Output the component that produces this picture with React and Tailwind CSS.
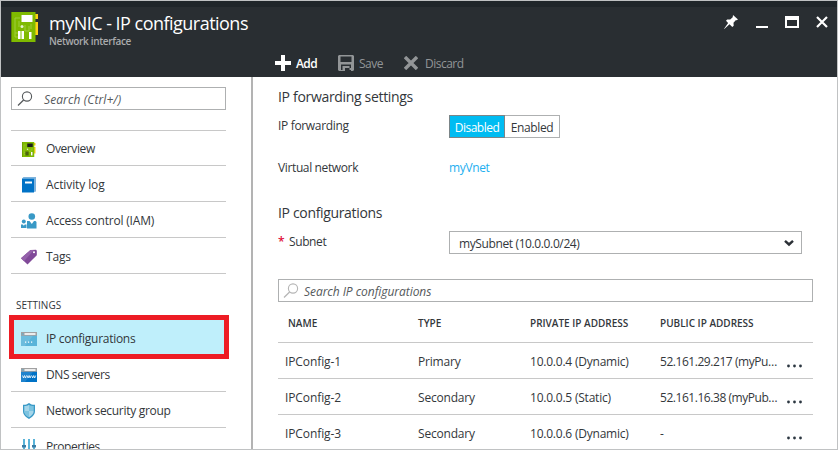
function NicIcon({ className, dark }) {
  return (
    <svg viewBox="0 0 28 30" className={className} preserveAspectRatio="none">
      <path d="M24 2h3v5h-3zM24 10h3v13h-3z" fill="#fcd116" />
      <path d="M0 0h24.500v30H0z" fill="#7fba00" />
      <path d="M0 0h1v30H0z" fill="#5e8a00" />
      <path d="M9 6H4v19h4M8 9v6M4 21h4M14 13v6h4v-5M20 12v5" fill="none" stroke="#a0cc3e" strokeWidth="1" />
      <path d="M10.500 3h11v7h-11z" fill={dark ? "#1e1e1e" : "#fff"} />
      <circle cx="11" cy="14.500" r="1.500" fill="#e8f3cf" />
      <path d="M7 19h2.500v8H7zM10.500 19H13v8h-2.500zM18 20h2.500v7H18z" fill={dark ? "#3c4a12" : "#fff"} />
      {dark && <path d="M18 20h3v7h-3z" fill="#fff" />}
    </svg>
  );
}

function BookIcon() {
  return (
    <svg viewBox="0 0 15 16" className="h-4 w-[15px]">
      <path d="M0 1.500 1.500 0H14v14.500L12 15V1.500z" fill="#7fb3dc" />
      <path d="M0 1.500h12V15.500H0z" fill="#0072c6" />
      <path d="M3 4.500h7v2H3z" fill="#fff" />
    </svg>
  );
}

function PeopleIcon() {
  return (
    <svg viewBox="0 0 16 16" className="size-4">
      <circle cx="2.800" cy="8.500" r="2" fill="#3999c6" />
      <path d="M0 11.500h1.800l1 1.200 1-1.200h1.700V15H0z" fill="#3999c6" />
      <circle cx="10.800" cy="3.500" r="3.300" fill="#3999c6" />
      <path d="M6 8h2.500l2.300 3L13 8h1.500l1 1v6.500H6z" fill="#3999c6" />
    </svg>
  );
}

function TagIcon() {
  return (
    <svg viewBox="0 0 16 16" className="size-4">
      <path d="M9.500 1 15 .8l.8 1v4.500L6.500 15.500 0 9.200z" fill="#804998" />
      <path d="M9.500 1 0 9.200l3 3L13 .9z" fill="#9461aa" />
      <circle cx="13" cy="3.300" r="1" fill="#fff" />
    </svg>
  );
}

function BrowserIcon({ www }) {
  return (
    <svg viewBox="0 0 16 14" className="h-[14px] w-4">
      <path d="M0 0h16v4H0z" fill="#a0a1a2" />
      <path d="M3.500 1.200h11v1.600h-11z" fill="#fff" />
      <circle cx="1.800" cy="2" r=".8" fill="#59b4d9" />
      <path d="M0 3.800h16V14H0z" fill={www ? "#0072c6" : "#59b4d9"} />
      <path d="M0 3.800h12L4 14H0z" fill="#fff" opacity=".12" />
      {www ? (
        <path d="m1.500 7.500 1 2.500 1-2.500 1 2.500 1-2.500m.6 0 1 2.500 1-2.500 1 2.500 1-2.500m.6 0 1 2.500 1-2.500 1 2.500 1-2.500" fill="none" stroke="#fff" strokeWidth=".8" />
      ) : (
        <path d="M4 9.500h1.200v1.200H4zM7 9.500h1.200v1.200H7zM10 9.500h1.200v1.200H10z" fill="#fff" />
      )}
    </svg>
  );
}

function ShieldIcon() {
  return (
    <svg viewBox="0 0 12 16" className="h-4 w-3">
      <path d="M6 0c2 1.500 4 2 6 1.800V8c0 4-3 6-6 8-3-2-6-4-6-8V1.800C2 2 4 1.500 6 0z" fill="#3999c6" />
      <path d="M6 1.700v12.500C3.200 12.500 1.300 11 1.300 8V3.100C3 3.100 4.500 2.700 6 1.700z" fill="#a5d6ea" />
      <path d="M6 1.700c1.500 1 3 1.400 4.700 1.400V8H6z" fill="#7cc3e0" />
      <path d="M1.300 8H6v6.200C3.200 12.500 1.300 11 1.300 8z" fill="#7cc3e0" />
      <path d="M6 8h4.700c0 3-1.900 4.500-4.700 6.200z" fill="#a5d6ea" />
    </svg>
  );
}

function SlidersIcon() {
  return (
    <svg viewBox="0 0 14 16" className="h-4 w-[14px]">
      <path d="M1 0h2v16H1zM6 0h2v16H6zM11 0h2v16h-2z" fill="#59b4d9" />
      <path d="M0 6h4v2.500H0zM5 10h4v2.500H5zM10 6h4v2.500h-4z" fill="#3a7ca5" />
    </svg>
  );
}

function SearchIcon({ className }) {
  return (
    <svg viewBox="0 0 16 16" className={className} fill="none" stroke="currentColor">
      <circle cx="10" cy="5.500" r="4.600" strokeWidth="1.100" />
      <path d="M6.600 9 1 14.500" strokeWidth="1.300" />
    </svg>
  );
}

function NavItem({ icon, label, tracking, last }) {
  return (
    <div className={`flex h-9 shrink-0 items-center border-b pt-[3px] ${last ? "border-transparent" : "border-[#c8c8c8]"}`}>
      <span className="ml-[10px] flex w-4 justify-center">{icon}</span>
      <span className={`ml-[9px] text-xs ${tracking}`}>{label}</span>
    </div>
  );
}

const rows = [
  ["IPConfig-1", "Primary", "10.0.0.4 (Dynamic)", "52.161.29.217 (myPu…"],
  ["IPConfig-2", "Secondary", "10.0.0.5 (Static)", "52.161.16.38 (myPub…"],
  ["IPConfig-3", "Secondary", "10.0.0.6 (Dynamic)", "-"],
];

export default function App() {
  return (
    <div className="flex h-[450px] w-[838px] flex-col overflow-hidden border border-[#c0c2c3] bg-white font-['Open_Sans','Noto_Sans',sans-serif] whitespace-nowrap text-[#33373b]">
      <header className="flex h-[76px] shrink-0 flex-col border-t-[6px] border-[#20262a] bg-[#292e32]">
        <div className="flex h-9 items-start">
          <NicIcon className="mt-[5px] ml-[10px] h-[30px] w-7" />
          <div className="ml-[10px] flex flex-col">
            <h1 className="mt-1 h-6 text-lg leading-6 tracking-[-0.52px] text-white">myNIC - IP configurations</h1>
            <p className="h-3 text-[10px] leading-3 font-semibold tracking-[-0.34px] text-[#a9abad]">Network interface</p>
          </div>
          <div className="mt-2 mr-[9px] ml-auto flex text-white">
            <svg viewBox="0 0 14 14" className="size-[14px]" fill="currentColor">
              <path d="m9 0 5 4.500-1.500.8-.8-.1-2.200 2.500.2 3.100-1.400 1.200-2.800-2.800L.3 14l-.2-.3 4-5.700L2 5.800l1.200-1.300 3 .1 2.500-2.400z" />
            </svg>
            <svg viewBox="0 0 12 14" className="ml-[18px] h-[14px] w-3"><path d="M0 11h12v2H0z" fill="currentColor" /></svg>
            <svg viewBox="0 0 14 14" className="ml-[17px] size-[14px]"><path d="M0 1h14v12H0zM2 5v6h10V5z" fill="currentColor" fillRule="evenodd" /></svg>
            <svg viewBox="0 0 12 14" className="ml-[17px] h-[14px] w-3"><path d="m1 2 10 10M11 2 1 12" stroke="currentColor" strokeWidth="2.200" /></svg>
          </div>
        </div>
        <div className="ml-[274px] flex h-[34px] items-center pt-1.5 text-xs">
          <svg viewBox="0 0 16 16" className="size-4 text-white"><path d="M6 0h4v6h6v4h-6v6H6v-6H0V6h6z" fill="currentColor" /></svg>
          <span className="ml-[5px] w-[42px] pt-0.5 font-semibold tracking-[-0.6px] text-white">Add</span>
          <svg viewBox="0 0 16 16" className="size-4 text-[#929597]"><path d="M1 0h14l1 1v14l-1 1h-2v-3H7v3H6v-3 3H1l-1-1V1zM2.500 1.500V7h11V1.500zM3 9.500V15h1.500v-4h7v4H13V9.500z" fill="currentColor" fillRule="evenodd" /></svg>
          <span className="ml-[5px] w-[45px] pt-0.5 tracking-[-0.5px] text-[#929597]">Save</span>
          <svg viewBox="0 0 14 14" className="size-[14px] text-[#929597]"><path d="m1 1 12 12M13 1 1 13" stroke="currentColor" strokeWidth="3.400" /></svg>
          <span className="ml-[7px] pt-0.5 tracking-[-0.5px] text-[#929597]">Discard</span>
        </div>
      </header>

      <div className="flex min-h-0 flex-1">
        <aside className="flex w-[252px] shrink-0 flex-col overflow-hidden border-r-2 border-[#b3b3b3] pt-[10px] pr-[25px] pl-[10px]">
          <div className="flex h-[23px] shrink-0 items-center border border-[#aeb0b1]">
            <SearchIcon className="ml-[5px] size-4 text-[#55595c]" />
            <span className="ml-[11px] pt-0.5 text-xs tracking-[0.1px] text-[#55595c] italic">Search (Ctrl+/)</span>
          </div>
          <nav className="mt-5 flex shrink-0 flex-col border-t border-[#c8c8c8]">
            <div className="-mt-px flex flex-col">
              <NavItem icon={<NicIcon dark className="h-[15px] w-[14px]" />} label="Overview" tracking="tracking-[-0.4px]" />
              <NavItem icon={<BookIcon />} label="Activity log" tracking="tracking-[-0.1px]" />
              <NavItem icon={<PeopleIcon />} label="Access control (IAM)" tracking="tracking-[-0.2px]" />
              <NavItem icon={<TagIcon />} label="Tags" tracking="tracking-[-0.2px]" />
            </div>
          </nav>
          <h2 className="mt-[23px] ml-[5px] h-[18px] shrink-0 text-[10px] leading-[16px]">SETTINGS</h2>
          <div className="-mr-[3px] -ml-[2px] flex h-11 shrink-0 items-center border-[5px] border-[#ed1c24] bg-[#bfeffb] pt-[3px]">
            <span className="ml-[7px] flex w-4"><BrowserIcon /></span>
            <span className="ml-[9px] text-xs tracking-[-0.28px]">IP configurations</span>
          </div>
          <nav className="-mt-[3px] flex flex-col">
            <NavItem icon={<BrowserIcon www />} label="DNS servers" tracking="tracking-[-0.4px]" />
            <NavItem icon={<ShieldIcon />} label="Network security group" tracking="tracking-[-0.3px]" />
            <NavItem icon={<SlidersIcon />} label="Properties" tracking="tracking-[-0.42px]" last />
          </nav>
        </aside>

        <main className="flex min-w-0 flex-1 flex-col overflow-hidden pt-[9px] pr-6 pl-[25px] text-xs">
          <h2 className="h-[22px] shrink-0 text-sm leading-[22px] tracking-[-0.32px]">IP forwarding settings</h2>
          <div className="mt-[7px] flex h-[23px] shrink-0">
            <span className="w-[171px] leading-[22px] tracking-[-0.33px]">IP forwarding</span>
            <div className="flex h-[23px] border border-[#aeb0b1] leading-[23px]">
              <span className="-my-px -ml-px w-14 border border-[#7b8588] bg-[#00bcf2] text-center font-medium tracking-[-0.5px] text-white">Disabled</span>
              <span className="w-[54px] text-center tracking-[-0.4px]">Enabled</span>
            </div>
          </div>
          <div className="mt-[19px] flex h-5 shrink-0 leading-[22px]">
            <span className="w-[171px] tracking-[-0.37px]">Virtual network</span>
            <span className="tracking-[-0.36px] text-[#1eaff0]">myVnet</span>
          </div>
          <h2 className="mt-[25px] h-[22px] shrink-0 text-sm leading-[22px] tracking-[-0.34px]">IP configurations</h2>
          <div className="mt-[7px] flex h-[23px] shrink-0">
            <span className="w-[171px] leading-[21px] tracking-[-0.4px]">
              <span className="inline-block w-[11px] font-semibold text-[#e0103a]">*</span>Subnet
            </span>
            <div className="flex w-[353px] items-center border border-[#aeb0b1] pr-[7px] pl-[9px]">
              <span className="pt-0.5 tracking-[-0.38px]">mySubnet (10.0.0.0/24)</span>
              <svg viewBox="0 0 10 8" className="ml-auto h-2 w-[10px]"><path d="M1 1.800 5 5.500 9 1.800" fill="none" stroke="#2b3036" strokeWidth="2.400" /></svg>
            </div>
          </div>
          <div className="mt-[25px] flex h-[23px] shrink-0 items-center border border-[#aeb0b1]">
            <SearchIcon className="ml-1 size-4 text-[#b5b5b5]" />
            <span className="ml-[5px] pt-0.5 tracking-[-0.05px] text-[#55595c] italic">Search IP configurations</span>
          </div>

          <div className="flex flex-col">
            <div className="grid h-[41px] shrink-0 grid-cols-[130px_112px_130px_126px_1fr] items-center border-b border-[#c8c8c8] pt-[3px] pl-[10px] text-[10px] font-semibold">
              <span>NAME</span>
              <span>TYPE</span>
              <span>PRIVATE IP ADDRESS</span>
              <span>PUBLIC IP ADDRESS</span>
            </div>
            {rows.map(([name, type, priv, pub]) => (
              <div key={name} className="grid h-9 shrink-0 grid-cols-[133px_112px_130px_127px_1fr] items-center border-b border-[#c8c8c8] pt-0.5 pl-[7px] font-medium">
                <span className="tracking-[-0.1px]">{name}</span>
                <span className="tracking-[-0.2px]">{type}</span>
                <span className="tracking-[-0.22px]">{priv}</span>
                <span className="tracking-[-0.45px]">{pub}</span>
                <svg viewBox="0 0 15 4" className="mt-[8px] h-1 w-[15px]" fill="#2b3640">
                  <circle cx="1.500" cy="2" r="1.400" />
                  <circle cx="7.500" cy="2" r="1.400" />
                  <circle cx="13.500" cy="2" r="1.400" />
                </svg>
              </div>
            ))}
          </div>
        </main>
      </div>
    </div>
  );
}
